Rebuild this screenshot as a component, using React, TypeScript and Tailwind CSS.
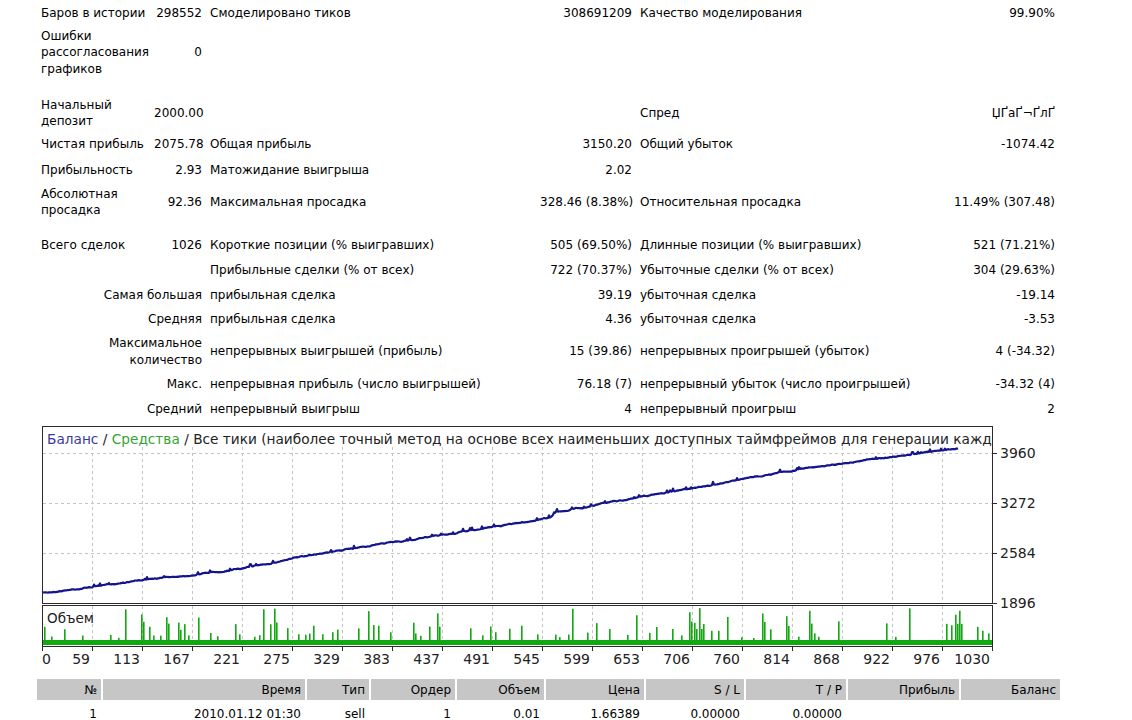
import React from 'react';

// deterministic random, so the chart looks the same on every run
function rng(seed: number) {
  let s = seed;
  return () => {
    s = (s * 16807) % 2147483647;
    return (s - 1) / 2147483646;
  };
}

const anchors: [number, number][] = [
  [42, 592], [100, 585], [150, 578], [200, 573], [250, 566], [300, 556], [350, 548],
  [400, 540], [450, 533], [500, 525], [550, 517], [556, 511], [600, 503], [650, 494],
  [700, 486], [750, 477], [800, 468], [850, 461], [900, 455], [930, 451], [958, 447],
];

function balancePath() {
  const r = rng(7);
  const pts: string[] = [];
  let noise = 0;
  let a = 0;
  for (let x = 42; x <= 958; x++) {
    while (a < anchors.length - 2 && anchors[a + 1][0] < x) a++;
    const [x0, y0] = anchors[a];
    const [x1, y1] = anchors[a + 1];
    const y = y0 + ((y1 - y0) * (x - x0)) / (x1 - x0);
    noise += (r() - 0.5) * 0.9;
    noise *= 0.85;
    let yy = y + noise;
    if (r() < 0.05) yy -= 1 + r() * 1.5;
    pts.push(`${x},${yy.toFixed(1)}`);
  }
  return 'M' + pts.join(' L');
}

function volumeBars() {
  const r = rng(1234);
  const bars: { x: number; h: number }[] = [];
  for (let x = 44; x < 990; x++) {
    if (r() < 0.15) {
      const k = r();
      const h = k < 0.2 ? 22 + r() * 12 : k < 0.55 ? 10 + r() * 10 : 3 + r() * 6;
      bars.push({ x, h });
      // tall spikes usually come with a shorter neighbour
      if (h > 18 && r() < 0.6) bars.push({ x: x + 2, h: h * (0.35 + r() * 0.4) });
      x += 3;
    }
  }
  return bars;
}

const xLabels = [0, 59, 113, 167, 221, 275, 329, 383, 437, 491, 545, 599, 653, 706, 760, 814, 868, 922, 976, 1030];
const yLabels: [string, number][] = [['3960', 452], ['3272', 502], ['2584', 552], ['1896', 602]];

const Lbl = ({ children, span = 1, right = false }: { children?: React.ReactNode; span?: number; right?: boolean }) => (
  <td colSpan={span} className={right ? 'px-[4px] text-right' : 'px-[4px] text-left'}>
    {children}
  </td>
);

const Val = ({ children }: { children?: React.ReactNode }) => (
  <td className="px-[4px] text-right whitespace-nowrap">{children}</td>
);

const StatsTable = () => (
  <table className="ml-[37px] w-[1022px] table-fixed border-collapse leading-[16.5px]">
    <colgroup>
      <col className="w-[113px]" />
      <col className="w-[56px]" />
      <col className="w-[330px]" />
      <col className="w-[100px]" />
      <col className="w-[310px]" />
      <col className="w-[113px]" />
    </colgroup>
    <tbody>
      <tr className="h-[26px]">
        <Lbl>Баров в истории</Lbl><Val>298552</Val>
        <Lbl>Смоделировано тиков</Lbl><Val>308691209</Val>
        <Lbl>Качество моделирования</Lbl><Val>99.90%</Val>
      </tr>
      <tr className="h-[53px]">
        <Lbl>Ошибки<br />рассогласования<br />графиков</Lbl><Val>0</Val>
        <td colSpan={4} />
      </tr>
      <tr className="h-[16px]"><td colSpan={6} /></tr>
      <tr className="h-[36px]">
        <Lbl>Начальный<br />депозит</Lbl><Val>2000.00</Val>
        <td /><td />
        <Lbl>Спред</Lbl><Val>ЏҐаҐ¬ҐлҐ</Val>
      </tr>
      <tr className="h-[27px]">
        <Lbl>Чистая прибыль</Lbl><Val>2075.78</Val>
        <Lbl>Общая прибыль</Lbl><Val>3150.20</Val>
        <Lbl>Общий убыток</Lbl><Val>-1074.42</Val>
      </tr>
      <tr className="h-[25px]">
        <Lbl>Прибыльность</Lbl><Val>2.93</Val>
        <Lbl>Матожидание выигрыша</Lbl><Val>2.02</Val>
        <td /><td />
      </tr>
      <tr className="h-[38px]">
        <Lbl>Абсолютная<br />просадка</Lbl><Val>92.36</Val>
        <Lbl>Максимальная просадка</Lbl><Val>328.46 (8.38%)</Val>
        <Lbl>Относительная просадка</Lbl><Val>11.49% (307.48)</Val>
      </tr>
      <tr className="h-[12px]"><td colSpan={6} /></tr>
      <tr className="h-[25px]">
        <Lbl>Всего сделок</Lbl><Val>1026</Val>
        <Lbl>Короткие позиции (% выигравших)</Lbl><Val>505 (69.50%)</Val>
        <Lbl>Длинные позиции (% выигравших)</Lbl><Val>521 (71.21%)</Val>
      </tr>
      <tr className="h-[25px]">
        <td /><td />
        <Lbl>Прибыльные сделки (% от всех)</Lbl><Val>722 (70.37%)</Val>
        <Lbl>Убыточные сделки (% от всех)</Lbl><Val>304 (29.63%)</Val>
      </tr>
      <tr className="h-[24px]">
        <Lbl span={2} right>Самая большая</Lbl>
        <Lbl>прибыльная сделка</Lbl><Val>39.19</Val>
        <Lbl>убыточная сделка</Lbl><Val>-19.14</Val>
      </tr>
      <tr className="h-[24px]">
        <Lbl span={2} right>Средняя</Lbl>
        <Lbl>прибыльная сделка</Lbl><Val>4.36</Val>
        <Lbl>убыточная сделка</Lbl><Val>-3.53</Val>
      </tr>
      <tr className="h-[41px]">
        <Lbl span={2} right>Максимальное<br />количество</Lbl>
        <Lbl>непрерывных выигрышей (прибыль)</Lbl><Val>15 (39.86)</Val>
        <Lbl>непрерывных проигрышей (убыток)</Lbl><Val>4 (-34.32)</Val>
      </tr>
      <tr className="h-[25px]">
        <Lbl span={2} right>Макс.</Lbl>
        <Lbl>непрерывная прибыль (число выигрышей)</Lbl><Val>76.18 (7)</Val>
        <Lbl>непрерывный убыток (число проигрышей)</Lbl><Val>-34.32 (4)</Val>
      </tr>
      <tr className="h-[24px]">
        <Lbl span={2} right>Средний</Lbl>
        <Lbl>непрерывный выигрыш</Lbl><Val>4</Val>
        <Lbl>непрерывный проигрыш</Lbl><Val>2</Val>
      </tr>
    </tbody>
  </table>
);

const Chart = () => {
  const path = balancePath();
  const bars = volumeBars();
  const gx = Array.from({ length: 20 }, (_, i) => 42 + i * 50);
  const font = 'DejaVu Sans, sans-serif';
  return (
    <svg width={1100} height={256} viewBox="0 420 1100 256" className="block">
      <defs>
        <clipPath id="hdr">
          <rect x={43} y={426} width={949} height={20} />
        </clipPath>
      </defs>
      {/* grid */}
      {gx.slice(1, 19).map((x) => (
        <g key={x} stroke="#c4c4c4" strokeDasharray="3 3">
          <line x1={x + 0.5} y1={446} x2={x + 0.5} y2={602} />
          <line x1={x + 0.5} y1={605} x2={x + 0.5} y2={645} />
        </g>
      ))}
      {[452, 502, 552].map((y) => (
        <line key={y} x1={43} y1={y + 0.5} x2={992} y2={y + 0.5} stroke="#c4c4c4" strokeDasharray="3 3" />
      ))}
      {/* volume */}
      {bars.map((b, i) => (
        <rect key={i} x={b.x} y={640 - b.h} width={1.6} height={b.h} fill="#12a812" />
      ))}
      <rect x={42} y={639} width={950} height={5} fill="#12a812" />
      {/* balance */}
      <path d={path} fill="none" stroke="#14148c" strokeWidth={2.2} strokeLinejoin="round" />
      {/* frames */}
      <rect x={42.5} y={425.5} width={950} height={177} fill="none" stroke="#2b2b2b" />
      <rect x={42.5} y={604.5} width={950} height={41} fill="none" stroke="#2b2b2b" />
      {yLabels.map(([, y]) => (
        <line key={y} x1={993} y1={y + 0.5} x2={997} y2={y + 0.5} stroke="#2b2b2b" />
      ))}
      {gx.map((x) => (
        <line key={x} x1={x + 0.5} y1={646} x2={x + 0.5} y2={650} stroke="#2b2b2b" />
      ))}
      {/* header */}
      <text x={47} y={443} fontFamily={font} fontSize={13.7} fill="#222" clipPath="url(#hdr)">
        <tspan fill="#3a3a9c">Баланс</tspan>
        <tspan> / </tspan>
        <tspan fill="#34a534">Средства</tspan>
        <tspan> / Все тики (наиболее точный метод на основе всех наименьших доступных таймфреймов для генерации каждого тика)</tspan>
      </text>
      <text x={47} y={622} fontFamily={font} fontSize={13.5} fill="#222">Объем</text>
      {yLabels.map(([t, y]) => (
        <text key={t} x={1000} y={y + 5} fontFamily={font} fontSize={14} fill="#222">{t}</text>
      ))}
      {xLabels.map((v, i) => (
        <text
          key={v}
          x={i === 0 ? 42 : gx[i] - 2}
          y={663}
          textAnchor={i === 0 ? 'start' : 'end'}
          fontFamily={font}
          fontSize={14}
          fill="#222"
        >
          {v}
        </text>
      ))}
    </svg>
  );
};

const dealCols = [
  { w: 'w-[64px]', head: '№', v: '1' },
  { w: 'w-[202px]', head: 'Время', v: '2010.01.12 01:30' },
  { w: 'w-[62px]', head: 'Тип', v: 'sell' },
  { w: 'w-[84px]', head: 'Ордер', v: '1' },
  { w: 'w-[87px]', head: 'Объем', v: '0.01' },
  { w: 'w-[98px]', head: 'Цена', v: '1.66389' },
  { w: 'w-[98px]', head: 'S / L', v: '0.00000' },
  { w: 'w-[100px]', head: 'T / P', v: '0.00000' },
  { w: 'w-[111px]', head: 'Прибыль', v: '' },
  { w: 'w-[99px]', head: 'Баланс', v: '' },
];

const Deals = () => (
  <table className="ml-[35px] mt-[2px] table-fixed border-separate border-spacing-x-[2px] border-spacing-y-0">
    <colgroup>
      {dealCols.map((c) => (
        <col key={c.head} className={c.w} />
      ))}
    </colgroup>
    <tbody>
      <tr className="h-[21px]">
        {dealCols.map((c) => (
          <td key={c.head} className="bg-[#c6c6c6] pr-[4px] text-right">{c.head}</td>
        ))}
      </tr>
      <tr className="h-[27px]">
        {dealCols.map((c) => (
          <td key={c.head} className="pr-[4px] text-right">{c.v}</td>
        ))}
      </tr>
    </tbody>
  </table>
);

export default function App() {
  return (
    <div className="h-[720px] w-[1132px] overflow-hidden bg-white font-['DejaVu_Sans',sans-serif] text-[12px] text-black">
      <StatsTable />
      <Chart />
      <Deals />
    </div>
  );
}
